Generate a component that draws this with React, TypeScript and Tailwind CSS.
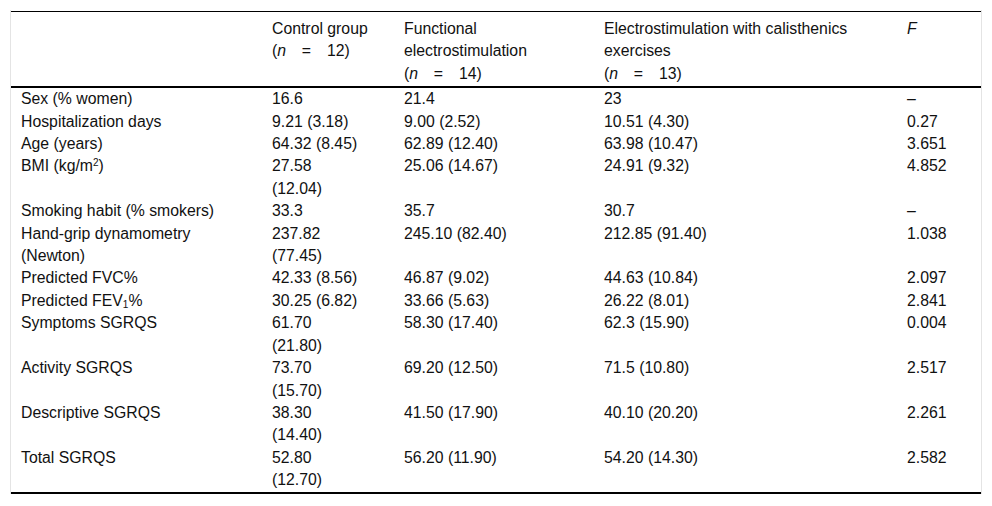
import React from "react";

type Row = { label: React.ReactNode[]; c: React.ReactNode[][]; f: string };

const rows: Row[] = [
  { label: ["Sex (% women)"], c: [["16.6"], ["21.4"], ["23"]], f: "–" },
  { label: ["Hospitalization days"], c: [["9.21 (3.18)"], ["9.00 (2.52)"], ["10.51 (4.30)"]], f: "0.27" },
  { label: ["Age (years)"], c: [["64.32 (8.45)"], ["62.89 (12.40)"], ["63.98 (10.47)"]], f: "3.651" },
  {
    label: [
      <span key="b">
        BMI (kg/m<sup className="text-[10px]">2</sup>)
      </span>,
    ],
    c: [["27.58", "(12.04)"], ["25.06 (14.67)"], ["24.91 (9.32)"]],
    f: "4.852",
  },
  { label: ["Smoking habit (% smokers)"], c: [["33.3"], ["35.7"], ["30.7"]], f: "–" },
  {
    label: ["Hand-grip dynamometry", "(Newton)"],
    c: [["237.82", "(77.45)"], ["245.10 (82.40)"], ["212.85 (91.40)"]],
    f: "1.038",
  },
  { label: ["Predicted FVC%"], c: [["42.33 (8.56)"], ["46.87 (9.02)"], ["44.63 (10.84)"]], f: "2.097" },
  {
    label: [
      <span key="f">
        Predicted FEV<sub className="text-[10px]">1</sub>%
      </span>,
    ],
    c: [["30.25 (6.82)"], ["33.66 (5.63)"], ["26.22 (8.01)"]],
    f: "2.841",
  },
  { label: ["Symptoms SGRQS"], c: [["61.70", "(21.80)"], ["58.30 (17.40)"], ["62.3 (15.90)"]], f: "0.004" },
  { label: ["Activity SGRQS"], c: [["73.70", "(15.70)"], ["69.20 (12.50)"], ["71.5 (10.80)"]], f: "2.517" },
  { label: ["Descriptive SGRQS"], c: [["38.30", "(14.40)"], ["41.50 (17.90)"], ["40.10 (20.20)"]], f: "2.261" },
  { label: ["Total SGRQS"], c: [["52.80", "(12.70)"], ["56.20 (11.90)"], ["54.20 (14.30)"]], f: "2.582" },
];

function Lines({ items }: { items: React.ReactNode[] }) {
  return (
    <>
      {items.map((t, i) => (
        <div key={i} className="whitespace-nowrap">
          {t}
        </div>
      ))}
    </>
  );
}

function N({ v }: { v: string }) {
  return (
    <span>
      (<i>n</i>
      {"\u2003=\u2003"}
      {v})
    </span>
  );
}

export default function App() {
  return (
    <div className="w-[992px] h-[506px] bg-white pt-[10px] pl-[10px]" style={{ fontFamily: '"Liberation Sans", Arial, sans-serif' }}>
      <div className="w-[972px] border-x border-[#e4e4e4] pt-px">
        <table className="table-fixed border-collapse text-[15.8px] leading-[22.4px] text-[#111]" style={{ width: 970 }}>
          <colgroup>
            <col style={{ width: 251 }} />
            <col style={{ width: 132 }} />
            <col style={{ width: 200 }} />
            <col style={{ width: 303 }} />
            <col style={{ width: 84 }} />
          </colgroup>
          <thead>
            <tr className="border-t border-b-2 border-black align-top text-left">
              <th className="font-normal pl-[10px] pt-[6px] pb-px"></th>
              <th className="font-normal pl-[10px] pt-[6px] pb-px">
                <Lines items={["Control group", <N key="n" v="12" />]} />
              </th>
              <th className="font-normal pl-[10px] pt-[6px] pb-px">
                <Lines items={["Functional", "electrostimulation", <N key="n" v="14" />]} />
              </th>
              <th className="font-normal pl-[10px] pt-[6px] pb-px">
                <Lines items={["Electrostimulation with calisthenics", "exercises", <N key="n" v="13" />]} />
              </th>
              <th className="font-normal pl-[10px] pt-[6px] pb-px">
                <i>F</i>
              </th>
            </tr>
          </thead>
          <tbody className="border-b-2 border-black">
            {rows.map((r, i) => (
              <tr key={i} className="align-top">
                <td className="pl-[10px] p-0">
                  <Lines items={r.label} />
                </td>
                {r.c.map((c, j) => (
                  <td key={j} className="pl-[10px] p-0">
                    <Lines items={c} />
                  </td>
                ))}
                <td className="pl-[10px] p-0">
                  <Lines items={[r.f]} />
                </td>
              </tr>
            ))}
          </tbody>
        </table>
      </div>
    </div>
  );
}
